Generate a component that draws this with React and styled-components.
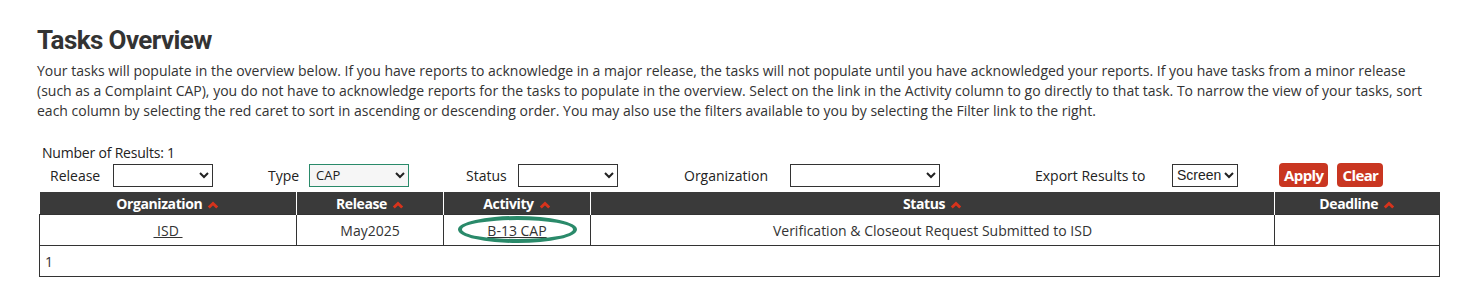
import styled, { createGlobalStyle } from "styled-components";

const GlobalStyle = createGlobalStyle`
    body {
        margin: 0;
        background: #fff;
        font-family: "Open Sans", "Liberation Sans", sans-serif;
        color: #333;
    }
`

const Page = styled.div`
    padding: 23px 0 0 37px;
    width: 1402px;
`

const Title = styled.h1`
    font-family: Roboto, "Liberation Sans", sans-serif;
    font-weight: 700;
    font-size: 26px;
    letter-spacing: -0.6px;
    color: #333;
    margin: 0 0 4px;
    line-height: 34px;
`

const Intro = styled.p`
    font-size: 14px;
    line-height: 20px;
    margin: 0 0 23px;
    color: #333;
    white-space: nowrap;
`

const Results = styled.div`
    font-size: 14px;
    line-height: 18px;
    letter-spacing: -0.2px;
    color: #222;
    margin-left: 5px;
`

const FilterRow = styled.div`
    display: flex;
    align-items: center;
    margin: 1px 0 5px 13px;
    height: 24px;
`

const Group = styled.div`
    display: flex;
    align-items: center;
    margin-right: ${(p) => p.$gap}px;
`

const Label = styled.label`
    width: ${(p) => p.$w}px;
    font-size: 14px;
    color: #222;
`

const Select = styled.select`
    width: ${(p) => p.$w}px;
    height: 23px;
    box-sizing: border-box;
    border: 1px solid ${(p) => (p.$active ? "#2a8a6a" : "#333")};
    background: ${(p) => (p.$active ? "#f6f6f6" : "#fff")};
    border-radius: 0;
    font-family: ${(p) => (p.$plain ? '"Liberation Sans", Arial, sans-serif' : '"Open Sans", sans-serif')};
    font-size: ${(p) => (p.$plain ? 14 : 13)}px;
    color: #222;
    padding: 0 ${(p) => (p.$plain ? 0 : 2)}px;
`

const Button = styled.button`
    height: 24px;
    padding: 0 5px;
    margin-right: 9px;
    border: none;
    border-radius: 4px;
    background: #c93621;
    color: #fff;
    font-family: "Open Sans", sans-serif;
    font-weight: 700;
    font-size: 15px;
    letter-spacing: -0.6px;
`

const Table = styled.table`
    border-collapse: collapse;
    width: 1400px;
    margin-left: 2px;
    font-size: 14px;
    table-layout: fixed;
`

const Th = styled.th`
    background: #3a3a3a;
    color: #fff;
    font-weight: 700;
    font-size: 14px;
    letter-spacing: -0.4px;
    height: 22px;
    padding: 0;
    border-left: 1px solid #fff;
    &:first-child {
        border-left: none;
    }
`

const Caret = styled.svg`
    width: 12px;
    height: 8px;
    margin-left: 5px;
    vertical-align: 0px;
`

const Td = styled.td`
    border: 1px solid #333;
    height: 30px;
    padding: 0;
    text-align: center;
    color: #333;
`

const FootCell = styled.td`
    border: 1px solid #333;
    height: 30px;
    padding: 0 0 0 5px;
    color: #333;
`

const CellLink = styled.a`
    color: #333;
    text-decoration: underline;
    position: relative;
`

const Ring = styled.span`
    position: absolute;
    left: -29px;
    top: 50%;
    margin-top: -14px;
    width: 119px;
    height: 27px;
    box-sizing: border-box;
    border: 4.5px solid #2a8a6a;
    border-radius: 50%;
`

function SortCaret() {
    return (
        <Caret viewBox="0 0 12 8">
            <path d="M1.8 6.6 L6 2.4 L10.2 6.6" fill="none" stroke="#d6331c" strokeWidth="2.8" />
        </Caret>
    );
}

const columns = [
    { name: "Organization", width: 257 },
    { name: "Release", width: 147 },
    { name: "Activity", width: 147 },
    { name: "Status", width: 684 },
    { name: "Deadline", width: 165 },
];

export default function App() {
    return (
        <>
            <GlobalStyle />
            <Page>
                <Title>Tasks Overview</Title>
                <Intro>
                    Your tasks will populate in the overview below. If you have reports to acknowledge in a major release, the tasks will not populate until you have acknowledged your reports. If you have tasks from a minor release
                    <br />
                    (such as a Complaint CAP), you do not have to acknowledge reports for the tasks to populate in the overview. Select on the link in the Activity column to go directly to that task. To narrow the view of your tasks, sort
                    <br />
                    each column by selecting the red caret to sort in ascending or descending order. You may also use the filters available to you by selecting the Filter link to the right.
                </Intro>
                <Results>Number of Results: 1</Results>
                <FilterRow>
                    <Group $gap={55}>
                        <Label $w={63}>Release</Label>
                        <Select $w={100}><option></option></Select>
                    </Group>
                    <Group $gap={57}>
                        <Label $w={41}>Type</Label>
                        <Select $w={100} $active><option>CAP</option></Select>
                    </Group>
                    <Group $gap={66}>
                        <Label $w={52}>Status</Label>
                        <Select $w={100}><option></option></Select>
                    </Group>
                    <Group $gap={95}>
                        <Label $w={106}>Organization</Label>
                        <Select $w={150}><option></option></Select>
                    </Group>
                    <Group $gap={41}>
                        <Label $w={137}>Export Results to</Label>
                        <Select $w={66} $plain><option>Screen</option></Select>
                    </Group>
                    <Button>Apply</Button>
                    <Button>Clear</Button>
                </FilterRow>
                <Table>
                    <colgroup>
                        {columns.map((c) => (
                            <col key={c.name} style={{ width: c.width }} />
                        ))}
                    </colgroup>
                    <thead>
                        <tr>
                            {columns.map((c) => (
                                <Th key={c.name}>
                                    {c.name}
                                    <SortCaret />
                                </Th>
                            ))}
                        </tr>
                    </thead>
                    <tbody>
                        <tr>
                            <Td><CellLink href="#">&nbsp;ISD&nbsp;</CellLink></Td>
                            <Td>May2025</Td>
                            <Td>
                                <CellLink href="#">
                                    B-13 CAP
                                    <Ring />
                                </CellLink>
                            </Td>
                            <Td>Verification &amp; Closeout Request Submitted to ISD</Td>
                            <Td></Td>
                        </tr>
                        <tr>
                            <FootCell colSpan={5}>1</FootCell>
                        </tr>
                    </tbody>
                </Table>
            </Page>
        </>
    );
}
